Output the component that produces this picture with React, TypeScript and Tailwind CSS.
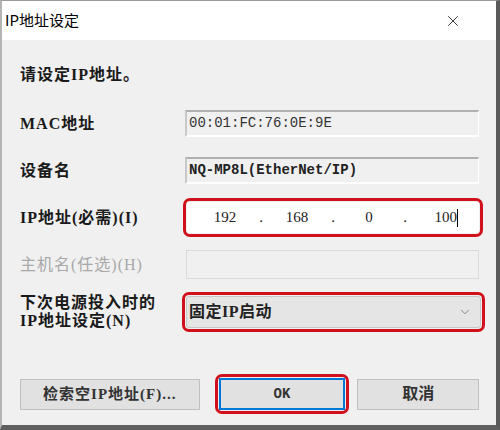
import { ChevronDown, X } from "lucide-react"

const cjk = { fontFamily: '"Liberation Serif", "Noto Sans CJK SC", serif' }
const mono = { fontFamily: '"Liberation Mono", "Noto Sans CJK SC", monospace' }

function Row({ label, children, muted }: { label: React.ReactNode; children: React.ReactNode; muted?: boolean }) {
  return (
    <div className="flex h-[47px] items-center">
      <div className={`w-[160px] shrink-0 text-[16px] leading-[18px] tracking-[1px] font-bold ${muted ? "text-[#a8a8a8] font-normal" : "text-[#1a1a1a]"}`}>
        {label}
      </div>
      <div className="flex-1">{children}</div>
    </div>
  )
}

export default function App() {
  return (
    <div className="w-[500px] h-[430px] bg-[#f0f0f0] flex flex-col border-l-2 border-l-[#b4b4b4] border-r-[4px] border-r-[#5a5a5a] border-b-[5px] border-b-[#5f5f5f] border-t border-t-[#9a9a9a]" style={cjk}>
      <div className="h-[39px] bg-white flex items-center justify-between pl-[3px] pr-[34px]">
        <span className="text-[15px] text-black" style={{ fontFamily: '"Noto Sans CJK SC", sans-serif' }}>IP地址设定</span>
        <X className="w-[18px] h-[18px] text-[#333]" strokeWidth={1.3} />
      </div>
      <div className="flex flex-col pl-[18px] pr-[17px]">
        <div className="mt-[23px] h-[24px] flex items-center text-[16px] font-bold tracking-[1px] text-[#1a1a1a]">请设定IP地址。</div>
        <div className="mt-[13px]">
          <Row label="MAC地址">
            <div className="h-[27px] ml-[5px] border-t-2 border-l-2 border-t-[#b0b0b0] border-l-[#c8c8c8] border-r border-b-2 border-r-white border-b-white flex items-center px-[2px] text-[14px] text-[#333]" style={mono}>
              00:01:FC:76:0E:9E
            </div>
          </Row>
          <Row label="设备名">
            <div className="h-[27px] ml-[5px] border-t-2 border-l-2 border-t-[#b0b0b0] border-l-[#c8c8c8] border-r border-b-2 border-r-white border-b-white flex items-center px-[2px] text-[14px] font-bold text-[#222]" style={mono}>
              NQ-MP8L(EtherNet/IP)
            </div>
          </Row>
          <Row label="IP地址(必需)(I)">
            <div className="h-[39px] ml-[3px] mr-[-4px] border-[3px] border-[#d0101c] rounded-[7px] p-[1px]">
              <div className="h-full bg-white rounded-[3px] grid grid-cols-[repeat(7,36px)] items-center text-[15px] text-[#222] pl-[20px]" style={cjk}>
                <span className="text-center">192</span>
                <span className="text-center">.</span>
                <span className="text-center">168</span>
                <span className="text-center">.</span>
                <span className="text-center">0</span>
                <span className="text-center">.</span>
                <span className="flex items-center justify-end pr-px">100<span className="w-px h-[18px] bg-black" /></span>
              </div>
            </div>
          </Row>
          <Row label="主机名(任选)(H)" muted>
            <div className="h-[29px] ml-[6px] border border-[#dadada] bg-[#f0f0f0]" />
          </Row>
          <Row label={<><div>下次电源投入时的</div><div>IP地址设定(N)</div></>}>
            <div className="h-[40px] ml-[2px] mr-[-6px] border-[3px] border-[#d0101c] rounded-[7px] p-[1px]">
              <div className="h-full bg-[#e5e5e5] border border-[#c6c6c6] rounded-[3px] flex items-center justify-between pl-[2px] pr-[8px]">
                <span className="text-[16px] font-bold text-[#222] tracking-[0.5px]">固定IP启动</span>
                <ChevronDown className="w-[14px] h-[14px] text-[#777]" strokeWidth={1.5} />
              </div>
            </div>
          </Row>
        </div>
        <div className="mt-[39px] flex items-center">
          <div className="w-[180px] h-[31px] border border-[#c0c0c0] bg-[#e1e1e1] flex items-center justify-center text-[15px] font-bold tracking-[1px] text-[#333]">
            检索空IP地址(F)...
          </div>
          <div className="ml-[15px] w-[135px] h-[40px] border-[3px] border-[#d0101c] rounded-[7px] p-px">
            <div className="h-full border-2 border-[#0078d7] bg-[#e1e1e1] flex items-center justify-center text-[14px] font-bold text-[#333]" style={mono}>
              OK
            </div>
          </div>
          <div className="ml-[8px] w-[122px] h-[31px] border border-[#c0c0c0] bg-[#e1e1e1] flex items-center justify-center text-[16px] font-bold text-[#333]">
            取消
          </div>
        </div>
      </div>
    </div>
  )
}
